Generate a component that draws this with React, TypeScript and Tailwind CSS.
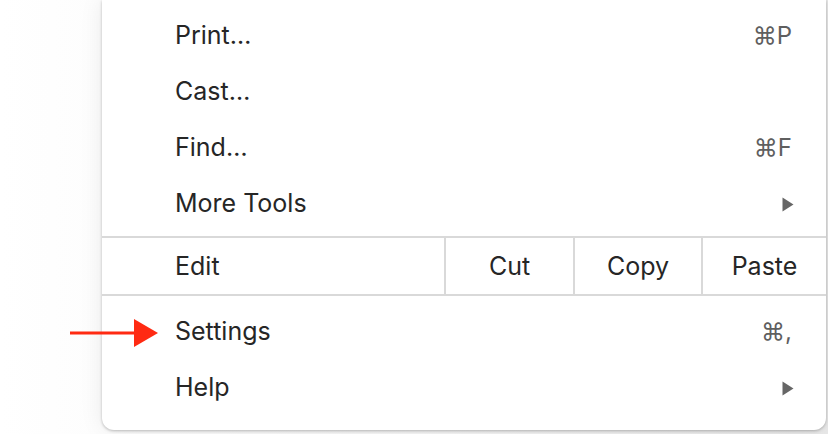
import React from 'react';

type Item = {
  label: string;
  shortcut?: string;
  submenu?: boolean;
};

const topItems: Item[] = [
  { label: 'Print…', shortcut: '⌘P' },
  { label: 'Cast…' },
  { label: 'Find…', shortcut: '⌘F' },
  { label: 'More Tools', submenu: true },
];

const bottomItems: Item[] = [
  { label: 'Settings', shortcut: '⌘,' },
  { label: 'Help', submenu: true },
];

const SubmenuArrow = () => (
  <svg width="12" height="15" viewBox="0 0 12 15" className="-mr-[2px]">
    <path d="M0.5 0.5 L11.5 7.5 L0.5 14.5 Z" fill="#666666" />
  </svg>
);

const MenuRow: React.FC<{ item: Item }> = ({ item }) => (
  <div className="flex h-[56px] items-center justify-between pl-[73px] pr-[34px]">
    <span className="text-[25px] text-[#262626]">{item.label}</span>
    {item.shortcut && (
      <span className="text-[24px] text-[#5f5f5f]">{item.shortcut}</span>
    )}
    {item.submenu && <SubmenuArrow />}
  </div>
);

const RedArrow = () => (
  <svg width="90" height="30" viewBox="0 0 90 30">
    <line x1="0" y1="15" x2="66" y2="15" stroke="#ff2a12" strokeWidth="3" />
    <path d="M64 1 L88 15 L64 29 Z" fill="#ff2a12" />
  </svg>
);

export default function App() {
  return (
    <div
      className="relative h-[434px] w-[828px] overflow-hidden bg-gradient-to-r from-white via-[#f7f7f7] to-[#e9e9e9]"
      style={{ fontFamily: 'Inter, "DejaVu Sans", sans-serif' }}
    >
      <div className="ml-[102px] w-[724px] rounded-b-[12px] bg-white pt-[8px] pb-[14px] shadow-[0_1px_3px_rgba(0,0,0,0.25),0_0_24px_rgba(0,0,0,0.08)]">
        {topItems.map((item) => (
          <MenuRow key={item.label} item={item} />
        ))}
        <div className="mt-[4px] flex h-[60px] border-y-2 border-[#d9d9d9] text-[25px] text-[#262626]">
          <div className="flex flex-1 items-center pt-[2px] pl-[73px]">Edit</div>
          <div className="flex w-[129px] items-center justify-center border-l-2 border-[#d9d9d9] pt-[2px]">
            Cut
          </div>
          <div className="flex w-[128px] items-center justify-center border-l-2 border-[#d9d9d9] pt-[2px]">
            Copy
          </div>
          <div className="flex w-[125px] items-center justify-center border-l-2 border-[#d9d9d9] pt-[2px]">
            Paste
          </div>
        </div>
        <div className="pt-[8px]">
          {bottomItems.map((item) => (
            <MenuRow key={item.label} item={item} />
          ))}
        </div>
      </div>
      <div className="absolute left-[70px] top-[318px]">
        <RedArrow />
      </div>
    </div>
  );
}
